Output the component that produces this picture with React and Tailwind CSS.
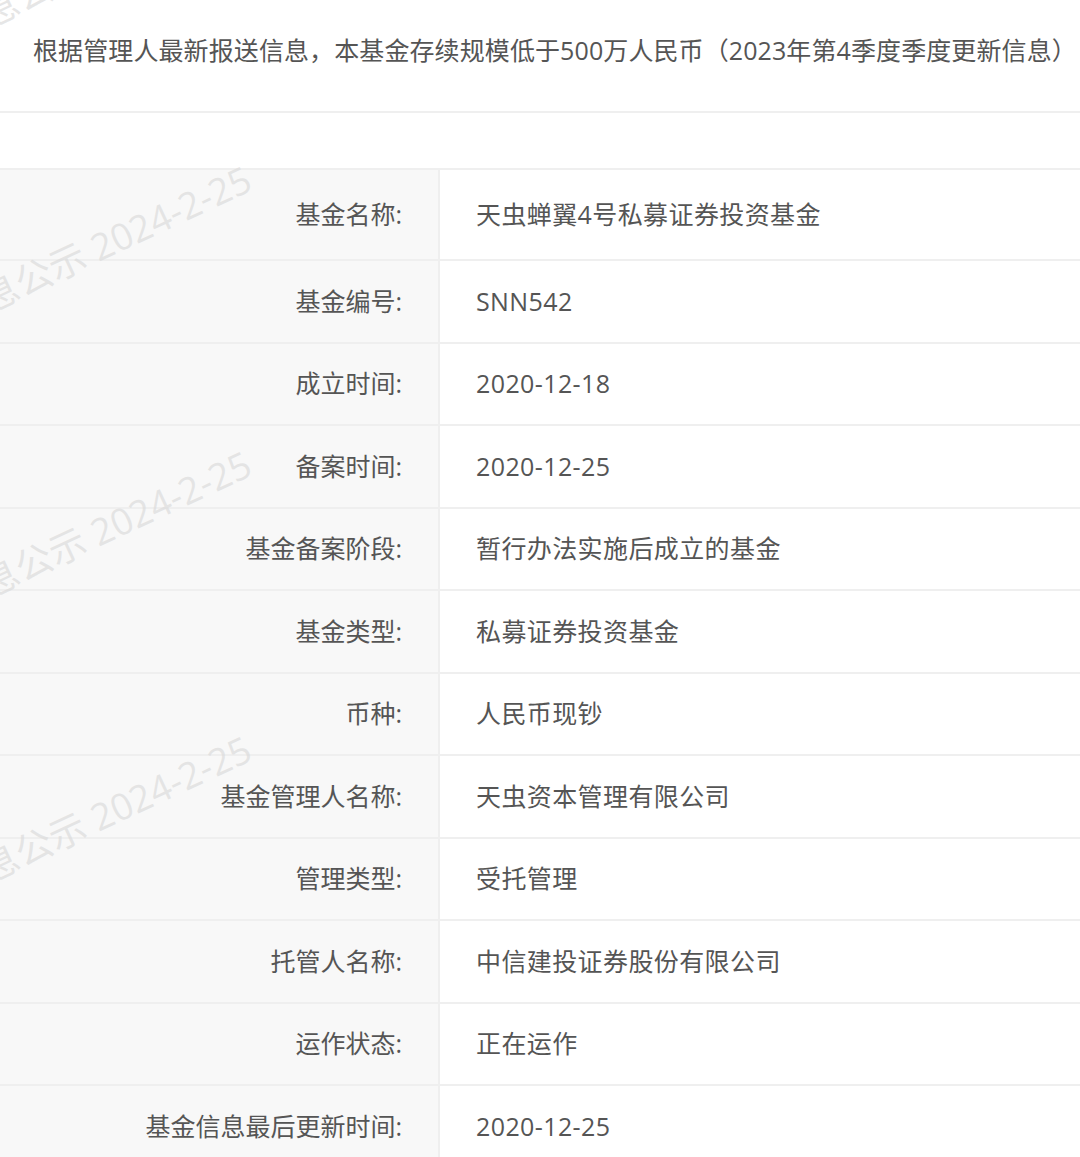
import React from 'react';

const rows = [
  ['基金名称:', '天虫蝉翼4号私募证券投资基金'],
  ['基金编号:', 'SNN542'],
  ['成立时间:', '2020-12-18'],
  ['备案时间:', '2020-12-25'],
  ['基金备案阶段:', '暂行办法实施后成立的基金'],
  ['基金类型:', '私募证券投资基金'],
  ['币种:', '人民币现钞'],
  ['基金管理人名称:', '天虫资本管理有限公司'],
  ['管理类型:', '受托管理'],
  ['托管人名称:', '中信建投证券股份有限公司'],
  ['运作状态:', '正在运作'],
  ['基金信息最后更新时间:', '2020-12-25'],
];

// baseline y of each watermark's right end
const marks = ['top-[-128px]', 'top-[157px]', 'top-[442px]', 'top-[727px]'];

export default function App() {
  return (
    <div className="relative w-[1080px] min-h-[1157px] overflow-hidden bg-white text-[25px] text-[#555] font-['Open_Sans','Noto_Sans_CJK_SC',sans-serif]">
      <div className="h-[113px] border-b-2 border-[#efefef] pl-[33px] pt-[30px] leading-[40px] whitespace-nowrap tracking-[0.1px]">
        根据管理人最新报送信息，本基金存续规模低于500万人民币（2023年第4季度季度更新信息）
      </div>

      <div className="mt-[55px] border-t-2 border-[#efefef]">
        {rows.map(([label, value], i) => (
          <div
            key={label}
            className={`flex ${i === 0 ? 'h-[89px]' : 'h-[82.5px] border-t-2 border-[#efefef]'}`}
          >
            <div className="w-[440px] shrink-0 flex items-center justify-end pr-[36px] bg-[#f8f8f8] border-r-2 border-[#efefef]">
              {label}
            </div>
            <div className="flex-1 flex items-center pl-[36px] bg-white tracking-[0.4px]">{value}</div>
          </div>
        ))}
      </div>

      {marks.map((t) => (
        <div
          key={t}
          className={`pointer-events-none absolute left-[-244px] ${t} w-[500px] h-[36px] flex justify-end items-end text-[37px] leading-none whitespace-nowrap text-[#dcdcdc]/70 origin-bottom-right -rotate-[25deg]`}
        >
          中国基金业协会信息公示 2024-2-25
        </div>
      ))}
    </div>
  );
}
